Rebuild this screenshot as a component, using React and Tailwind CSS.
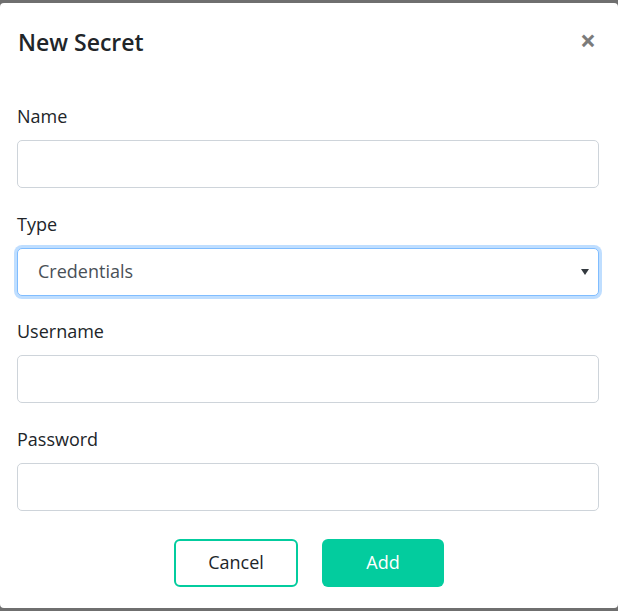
import { useState } from 'react'

const font = { fontFamily: '"Open Sans", "Noto Sans", sans-serif' }

function Field({ label, children }) {
  return (
    <div className="flex flex-col">
      <label className="text-[18px] leading-[27px] text-[#212529] mb-[10px]">{label}</label>
      {children}
    </div>
  )
}

export default function App() {
  const [type, setType] = useState('Credentials')

  return (
    <div className="w-[618px] h-[611px] bg-[#6f6f6f] pt-[3px] overflow-hidden" style={font}>
      <div className="h-[605px] bg-white rounded-[4px] flex flex-col">
        {/* Header */}
        <div className="flex items-center justify-between pl-[18px] pr-[22px] pt-[21px] pb-[43px]">
          <h4 className="text-[23px] leading-[36px] font-semibold text-[#212529]">New Secret</h4>
          <button type="button" className="text-[#7b7b7b] text-[28px] leading-none font-bold pb-[4px]">
            ×
          </button>
        </div>

        {/* Body */}
        <div className="flex flex-col gap-[22.5px] pl-[17px] pr-[19px]">
          <Field label="Name">
            <input className="h-[48px] w-full rounded-[5px] border border-[#ced4da] outline-none px-[20px] text-[18px]" />
          </Field>
          <Field label="Type">
            <div className="relative">
              <select
                value={type}
                onChange={(e) => setType(e.target.value)}
                className="appearance-none h-[48px] w-full rounded-[5px] border border-[#80bdff] shadow-[0_0_0_3px_rgba(0,123,255,0.25)] outline-none pl-[20px] text-[18px] text-[#495057] bg-white"
              >
                <option>Credentials</option>
                <option>Token</option>
              </select>
              <svg className="absolute right-[10px] top-[20px]" width="8" height="8" viewBox="0 0 8 8">
                <path d="M0 1h8L4 7z" fill="#343a40" />
              </svg>
            </div>
          </Field>
          <Field label="Username">
            <input className="h-[48px] w-full rounded-[5px] border border-[#ced4da] outline-none px-[20px] text-[18px]" />
          </Field>
          <Field label="Password">
            <input type="password" className="h-[48px] w-full rounded-[5px] border border-[#ced4da] outline-none px-[20px] text-[18px]" />
          </Field>
        </div>

        {/* Footer */}
        <div className="flex justify-center gap-[24px] mt-[28px]">
          <button
            type="button"
            className="w-[124px] h-[48px] rounded-[6px] border-2 border-[#03cc9e] bg-white text-[18px] text-[#212529]"
          >
            Cancel
          </button>
          <button
            type="button"
            className="w-[122px] h-[48px] rounded-[6px] bg-[#03cc9e] text-[18px] text-white"
          >
            Add
          </button>
        </div>
      </div>
    </div>
  )
}
